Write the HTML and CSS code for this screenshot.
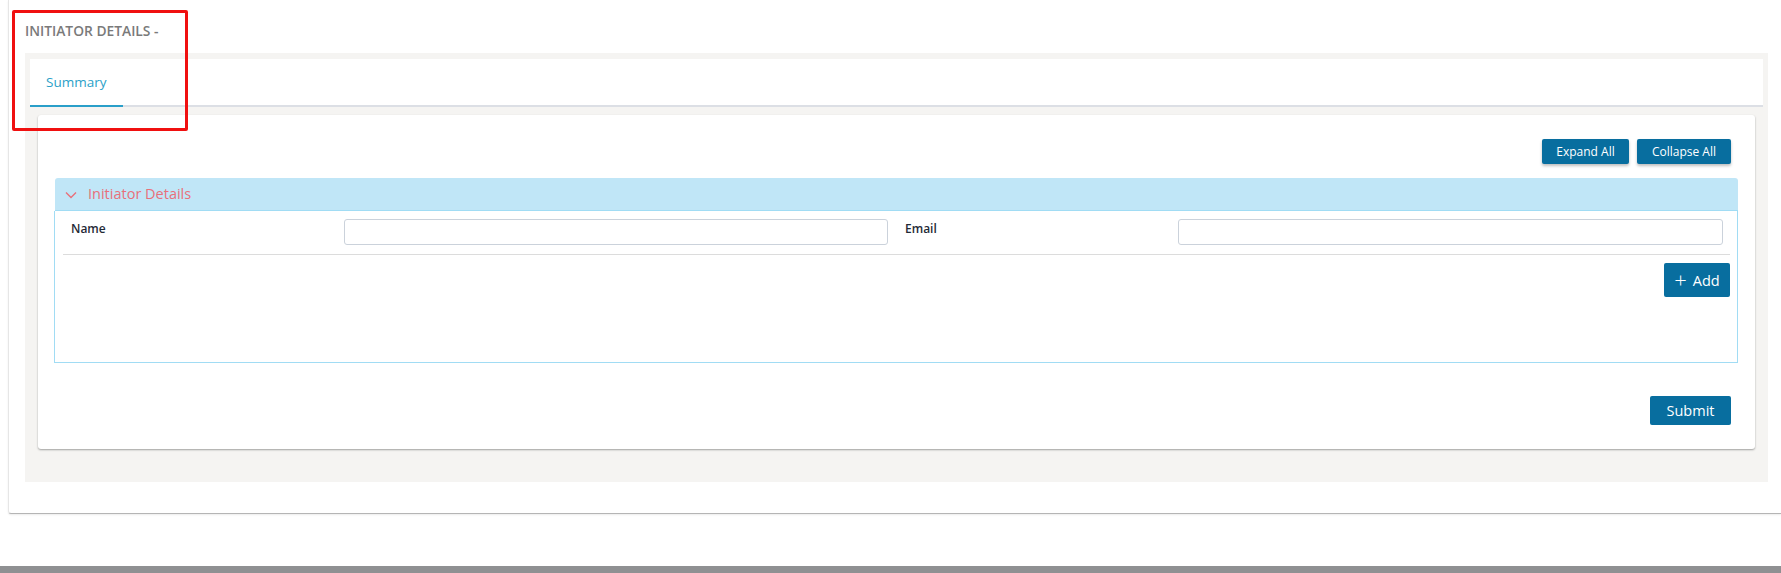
FILE: index.html
```html
<!DOCTYPE html>
<html lang="en">
<head>
<meta charset="utf-8">
<title>Initiator Details</title>
<link rel="stylesheet" href="styles.css">
</head>
<body>
<div class="page">
  <div class="outer-card">
    <h1 class="page-title">INITIATOR DETAILS -</h1>
    <div class="panel">
      <div class="tabs">
        <div class="tab active">Summary</div>
      </div>
      <div class="form-card">
        <div class="toolbar">
          <button class="btn btn-sm btn-expand">Expand All</button>
          <button class="btn btn-sm btn-collapse">Collapse All</button>
        </div>
        <div class="accordion">
          <div class="acc-header">
            <svg class="chev" width="12" height="8" viewBox="0 0 12 8"><path d="M1 1.5 L6 6.5 L11 1.5" fill="none" stroke="#e9707b" stroke-width="1.4"/></svg>
            <span class="acc-title">Initiator Details</span>
          </div>
          <div class="acc-body">
            <div class="field-row">
              <label class="lbl">Name</label>
              <input class="inp inp-first" type="text">
              <label class="lbl">Email</label>
              <input class="inp" type="text">
            </div>
            <div class="divider"></div>
            <div class="add-row">
              <button class="btn btn-add"><span class="plus">+</span>Add</button>
            </div>
          </div>
        </div>
        <div class="submit-row">
          <button class="btn btn-submit">Submit</button>
        </div>
      </div>
    </div>
  </div>
  <div class="footer-bar"></div>
</div>
<div class="highlight"></div>
</body>
</html>
```
FILE: styles.css
```css
* { box-sizing: border-box; }
html, body { margin: 0; padding: 0; background: #fff; }
body {
  font-family: "Open Sans", "Liberation Sans", sans-serif;
  width: 1781px;
  height: 573px;
  overflow: hidden;
  position: relative;
}
.page {
  display: flex;
  flex-direction: column;
  height: 573px;
}
.outer-card {
  margin-left: 8px;
  width: 1773px;
  height: 514px;
  padding: 21px 13px 0 16px;
  border-left: 1px solid #e6e6e6;
  border-bottom: 1px solid #b5b5b5;
  border-bottom-left-radius: 3px;
  box-shadow: 0 1px 2px rgba(0,0,0,0.08);
}
.page-title {
  margin: 0 0 12px 0;
  font-size: 13.8px;
  font-weight: 600;
  line-height: 20px;
  color: #7a7a7a;
}
.panel {
  background: #f5f4f2;
  padding: 6px 5px 33px 5px;
  height: 429px;
}
.tabs {
  background: #fff;
  height: 48px;
  border-bottom: 2px solid #dcdfe5;
  display: flex;
}
.tab {
  height: 48px;
  padding: 0 16px;
  line-height: 46px;
  font-size: 13.5px;
  color: #2b9fc8;
  width: 93px;
}
.tab.active { border-bottom: 2px solid #2a9fc9; }
.form-card {
  background: #fff;
  margin: 8px 8px 0 8px;
  height: 334px;
  border-radius: 3px;
  box-shadow: 0 1px 2px rgba(0,0,0,0.35);
  padding: 24px 17px 0 17px;
}
.toolbar {
  display: flex;
  justify-content: flex-end;
  gap: 8px;
  padding-right: 7px;
}
.btn {
  font-family: "Open Sans", "Liberation Sans", sans-serif;
  background: #086e9f;
  color: #fff;
  border: none;
  border-radius: 2px;
  cursor: pointer;
  padding: 0;
}
.btn-sm {
  height: 25px;
  font-size: 12px;
  font-weight: 400;
  box-shadow: 0 2px 3px rgba(0,0,0,0.25);
}
.btn-expand { width: 87px; }
.btn-collapse { width: 94px; }
.accordion { margin-top: 14px; }
.acc-header {
  background: #c0e6f7;
  height: 33px;
  border-bottom: 1px solid #a1dcf4;
  border-radius: 3px 3px 0 0;
  display: flex;
  align-items: center;
  padding-left: 10px;
}
.chev { margin-right: 11px; margin-top: 1px; }
.acc-title {
  font-size: 14.5px;
  color: #e8707b;
  line-height: 20px;
}
.acc-body {
  border: 1px solid #a1dcf4;
  border-top: none;
  height: 152px;
  padding: 8px 7px 0 8px;
  margin-left: -1px;
}
.field-row {
  display: grid;
  grid-template-columns: 273px 561px 273px 545px;
  align-items: start;
  padding-left: 8px;
}
.lbl {
  font-size: 12px;
  font-weight: 600;
  color: #1f2a36;
  line-height: 16px;
  padding-top: 2px;
}
.inp {
  height: 26px;
  border: 1px solid #cbd2db;
  border-radius: 3px;
  background: #fff;
  width: 100%;
  margin: 0;
}
.inp-first { width: 544px; }
.divider {
  height: 1px;
  background: #dcdcdc;
  margin-top: 9px;
}
.add-row {
  display: flex;
  justify-content: flex-end;
  margin-top: 8px;
}
.btn-add {
  width: 66px;
  height: 34px;
  font-size: 14.5px;
  display: flex;
  align-items: center;
  justify-content: center;
  gap: 6px;
}
.plus {
  font-size: 22px;
  font-weight: 300;
  line-height: 20px;
  margin-top: -3px;
}
.submit-row {
  display: flex;
  justify-content: flex-end;
  padding-right: 7px;
  margin-top: 33px;
}
.btn-submit {
  width: 81px;
  height: 29px;
  font-size: 14.5px;
}
.footer-bar {
  margin-top: auto;
  height: 7px;
  background: #8f9092;
}
.highlight {
  position: absolute;
  left: 12px;
  top: 10px;
  width: 176px;
  height: 121px;
  border: 3px solid #f01010;
  border-radius: 2px;
}
```
